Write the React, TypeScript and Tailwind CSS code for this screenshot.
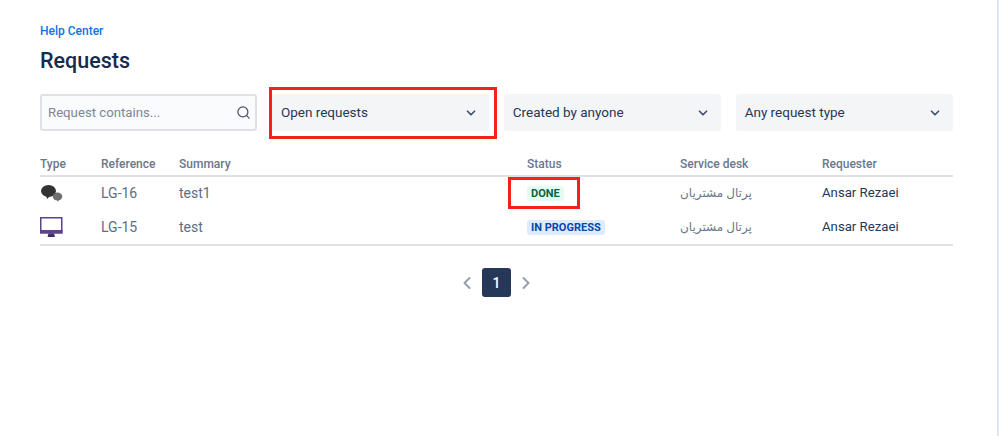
import { ChevronDown, ChevronLeft, ChevronRight, Search } from "lucide-react";

const fontStack = "font-['Roboto','DejaVu_Sans',sans-serif]";

const requests = [
  { id: "LG-16", summary: "test1", status: "DONE", kind: "chat" },
  { id: "LG-15", summary: "test", status: "IN PROGRESS", kind: "screen" },
];

const filters = ["Open requests", "Created by anyone", "Any request type"];

const columns = "grid grid-cols-[61px_78px_348px_153px_142px_131px] items-center";

function ChatIcon() {
  return (
    <svg width="22" height="17" viewBox="0 0 22 17" className="ml-px">
      <ellipse cx="7.500" cy="6" rx="7.500" ry="6" fill="#333333" />
      <path d="M5 10l1 4 3-3z" fill="#333333" />
      <ellipse cx="16.500" cy="11.500" rx="4.800" ry="4" fill="#707070" />
      <path d="M15.500 14l1.500 3 1-3z" fill="#707070" />
    </svg>
  );
}

function ScreenIcon() {
  return (
    <svg width="23" height="21" viewBox="0 0 23 21">
      <rect x="0.750" y="0.750" width="21" height="15" fill="#ffffff" stroke="#5e4389" strokeWidth="1.500" />
      <rect x="0" y="13" width="22.500" height="3.500" fill="#5e4389" />
      <path d="M8.500 16.500h5.500l1 3.500H7.500z" fill="#3f2d66" />
    </svg>
  );
}

function StatusPill({ status }: { status: string }) {
  const done = status === "DONE";
  return (
    <span
      className={`inline-flex h-[15px] items-center rounded-[3px] px-1 text-[11px] font-bold leading-none ${
        done ? "bg-[#e3fcef] text-[#006644]" : "bg-[#deebff] text-[#0747a6]"
      }`}
    >
      {status}
    </span>
  );
}

export default function App() {
  return (
    <div className={`relative h-[436px] w-[999px] overflow-hidden bg-white ${fontStack}`}>
      {/* Thin edge line from the original screenshot */}
      <div className="absolute top-0 right-0 bottom-0 w-[2px] bg-[#dbe5f5]" />

      <div className="w-[953px] pt-6 pl-10">
        <a className="block text-xs leading-[14px] font-medium text-[#0c74e4]">Help Center</a>
        <h1 className="mt-[7px] text-[21.500px] leading-8 font-medium text-[#172b4d]">Requests</h1>

        {/* Filters */}
        <div className="mt-[17px] grid grid-cols-4 gap-x-[14.500px]">
          <div className="flex h-[37px] items-center justify-between rounded-[3px] border-2 border-[#dfe1e6] bg-[#fafbfc] pr-[4px] pl-[6px]">
            <span className="text-[13.200px] text-[#7a869a]">Request contains...</span>
            <Search size={15} strokeWidth={2} className="text-[#42526e]" />
          </div>
          {filters.map((label) => (
            <div
              key={label}
              className="flex h-[37px] items-center justify-between rounded-[3px] bg-[#f4f5f7] pr-[11px] pl-[9px]"
            >
              <span className="text-[13.500px] text-[#253858]">{label}</span>
              <ChevronDown size={14} strokeWidth={3} className="text-[#42526e]" />
            </div>
          ))}
        </div>

        {/* Requests table */}
        <div className="mt-[24px]">
          <div className={`${columns} h-[22px] border-b-2 border-[#dfe1e6] pb-[2px] text-xs font-medium text-[#6b778c]`}>
            <span>Type</span>
            <span>Reference</span>
            <span>Summary</span>
            <span>Status</span>
            <span>Service desk</span>
            <span>Requester</span>
          </div>
          {requests.map((req) => (
            <div key={req.id} className={`${columns} h-[34px] pb-[2px] text-sm leading-5 text-[#5e6c84]`}>
              <span className="flex items-center">
                {req.kind === "chat" ? <ChatIcon /> : <ScreenIcon />}
              </span>
              <span>{req.id}</span>
              <span>{req.summary}</span>
              <span className="flex items-center">
                <StatusPill status={req.status} />
              </span>
              <span dir="rtl" className="w-fit text-right text-xs leading-5 text-[#6b778c]">پرتال مشتریان</span>
              <span className="text-[13.200px] leading-5 text-[#253858]">Ansar Rezaei</span>
            </div>
          ))}
          <div className="-mt-px border-b-2 border-[#dfe1e6]" />
        </div>

        {/* Pagination */}
        <div className="mt-[22px] flex items-center justify-center gap-[5px]">
          <ChevronLeft size={20} strokeWidth={2.500} className="text-[#97a0af]" />
          <span className="flex h-[29px] w-[29px] items-center justify-center rounded-[3px] bg-[#253858] text-sm font-medium text-white">
            1
          </span>
          <ChevronRight size={20} strokeWidth={2.500} className="text-[#97a0af]" />
        </div>
      </div>

      {/* Red annotation boxes drawn over the page */}
      <div className="absolute top-[87px] left-[269px] h-[52px] w-[228px] border-[3px] border-[#f5211b]" />
      <div className="absolute top-[177px] left-[508px] h-[32px] w-[72px] border-[3px] border-[#f5211b]" />
    </div>
  );
}
